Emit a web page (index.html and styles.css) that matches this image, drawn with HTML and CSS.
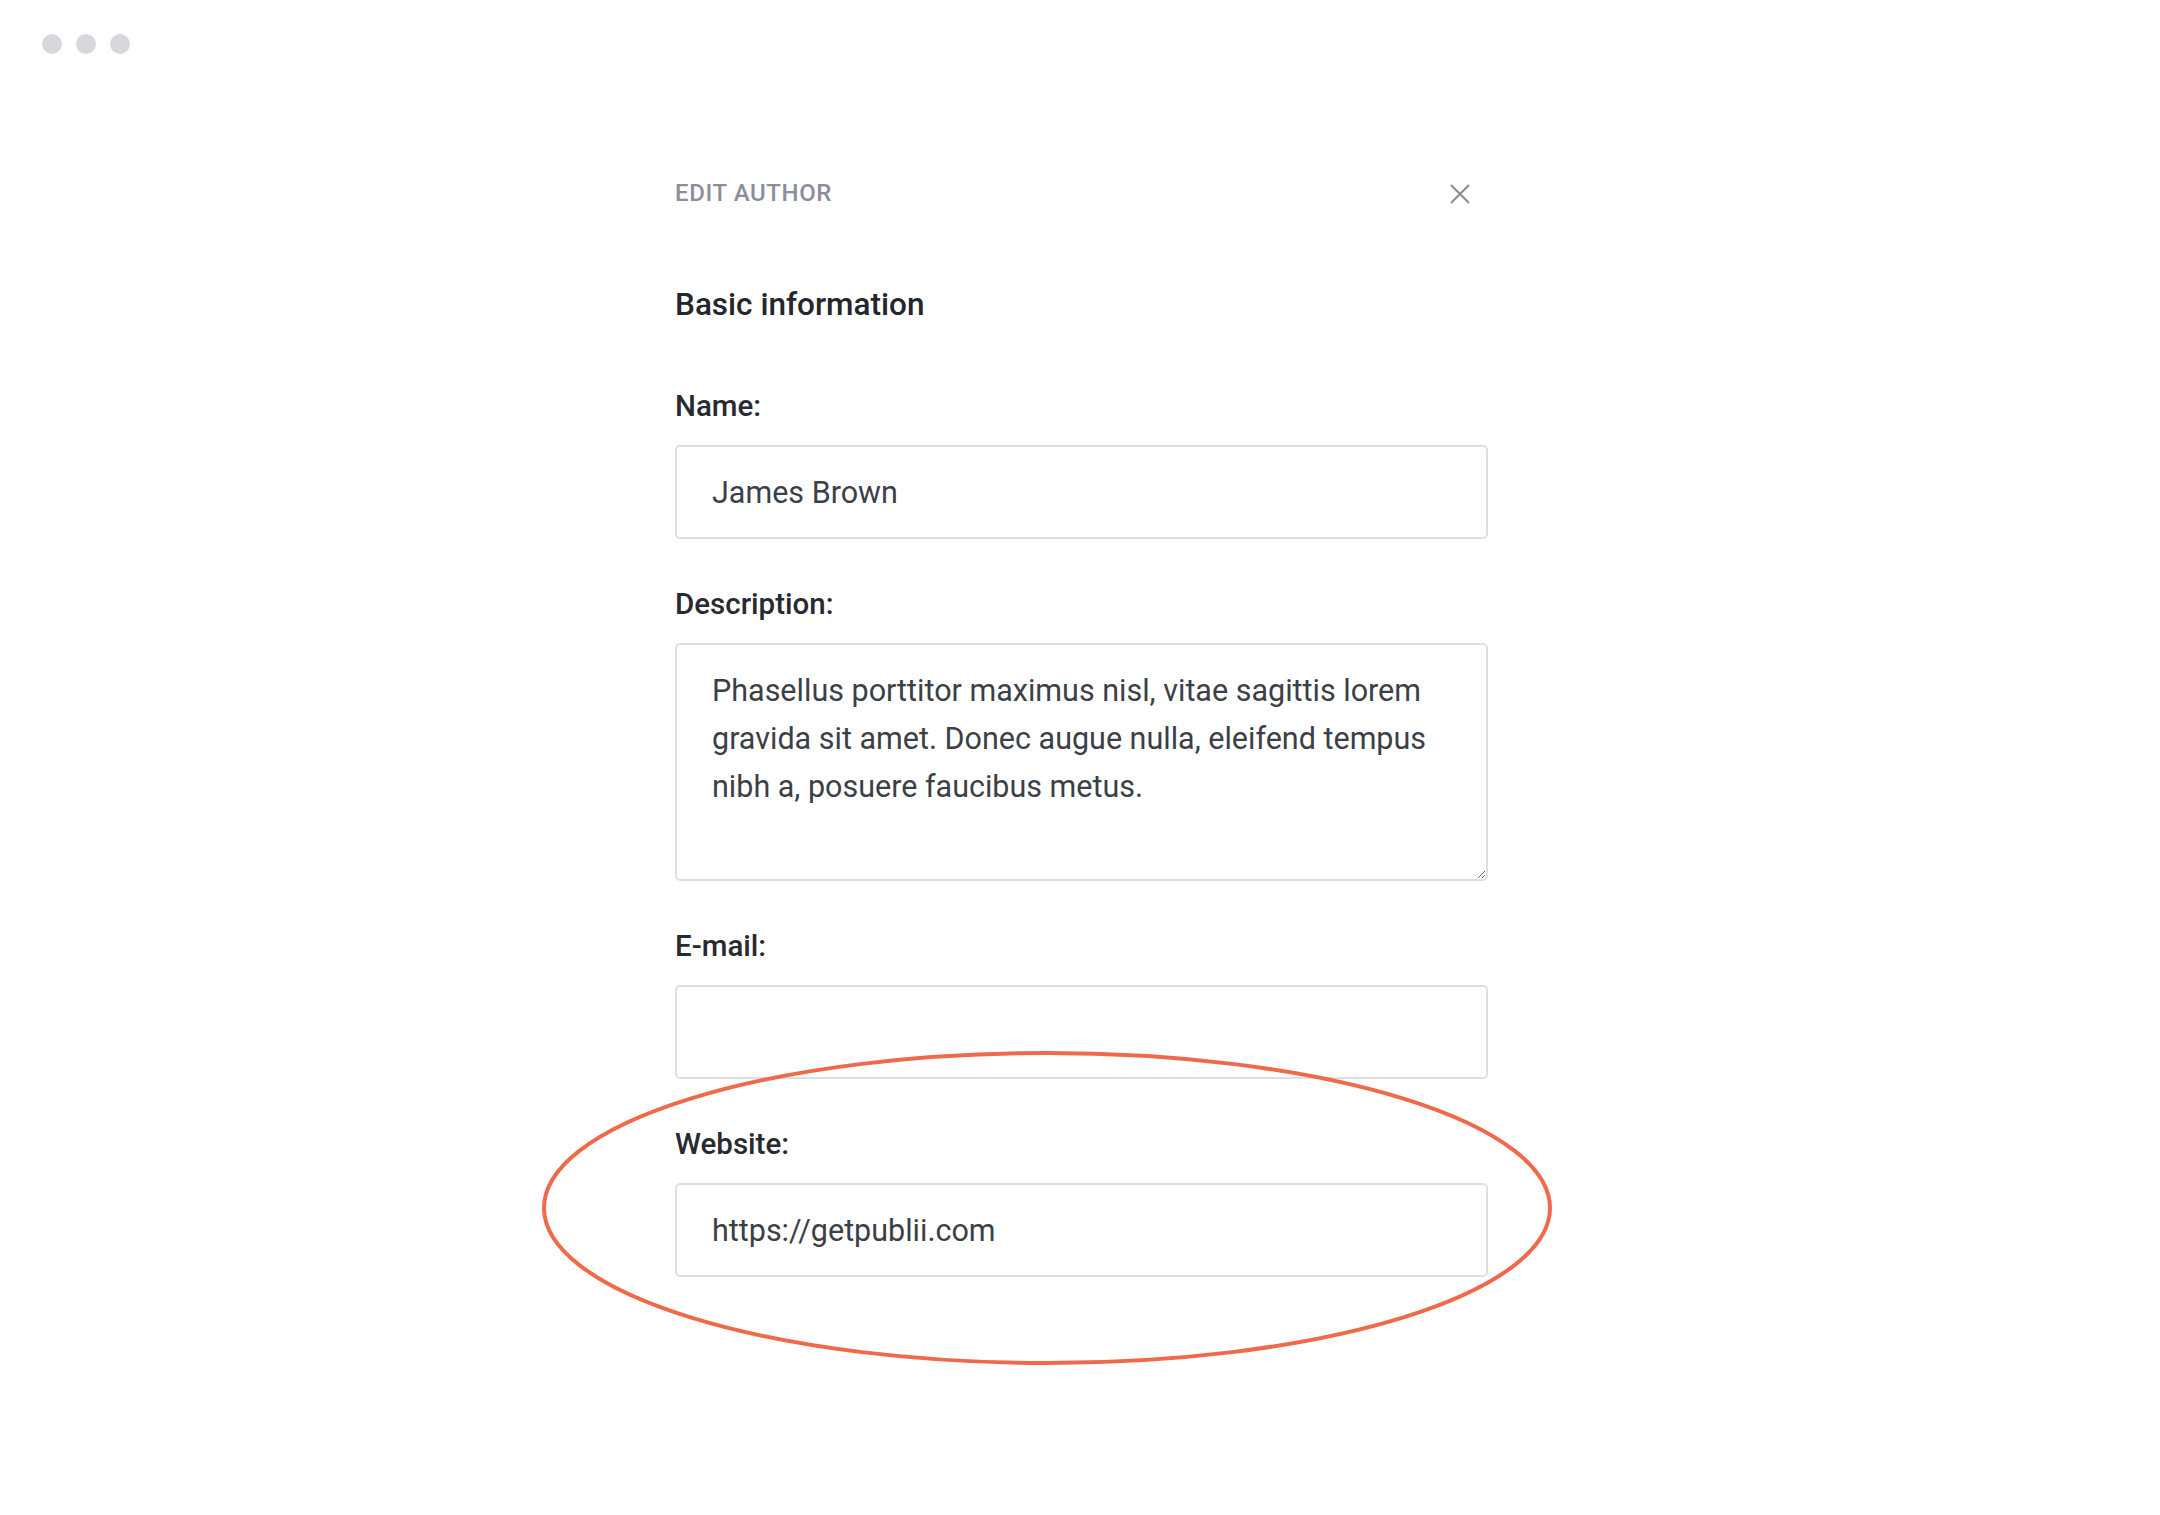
FILE: index.html
```html
<!DOCTYPE html>
<html lang="en">
<head>
<meta charset="utf-8">
<title>Edit author</title>
<link rel="stylesheet" href="styles.css">
</head>
<body>
<div class="window-bar">
  <span class="dot"></span>
  <span class="dot"></span>
  <span class="dot"></span>
</div>
<main class="panel">
  <header class="panel-header">
    <h1 class="panel-title">EDIT AUTHOR</h1>
    <button class="close-btn" type="button" aria-label="Close">
      <svg width="20" height="20" viewBox="0 0 20 20" aria-hidden="true">
        <path d="M1 1 L19 19 M19 1 L1 19" stroke="#8b8e99" stroke-width="2.2" stroke-linecap="butt" fill="none"/>
      </svg>
    </button>
  </header>
  <h2 class="section-title">Basic information</h2>
  <div class="field">
    <label class="field-label" for="name">Name:</label>
    <input class="field-input" id="name" type="text" value="James Brown">
  </div>
  <div class="field">
    <label class="field-label" for="desc">Description:</label>
    <textarea class="field-input field-textarea" id="desc">Phasellus porttitor maximus nisl, vitae sagittis lorem gravida sit amet. Donec augue nulla, eleifend tempus nibh a, posuere faucibus metus.</textarea>
  </div>
  <div class="field">
    <label class="field-label" for="email">E-mail:</label>
    <input class="field-input" id="email" type="text" value="">
  </div>
  <div class="field field-highlight">
    <label class="field-label" for="website">Website:</label>
    <input class="field-input" id="website" type="text" value="https://getpublii.com">
    <svg class="highlight-ring" width="1010" height="314" viewBox="0 0 1010 314" aria-hidden="true">
      <ellipse cx="505" cy="157" rx="503" ry="155" fill="none" stroke="#ef6a4b" stroke-width="4"/>
    </svg>
  </div>
</main>
</body>
</html>
```

FILE: styles.css
```css
html, body {
  margin: 0;
  padding: 0;
  background: #ffffff;
}

body {
  font-family: Roboto, "Liberation Sans", Arial, sans-serif;
  color: #24272e;
  width: 2160px;
  min-height: 1515px;
}

.window-bar {
  display: flex;
  gap: 14px;
  padding: 34px 0 0 42px;
  height: 54px;
  box-sizing: border-box;
}

.dot {
  width: 20px;
  height: 20px;
  border-radius: 50%;
  background: #d7d8dd;
}

.panel {
  width: 813px;
  margin: 124px 0 0 675px;
}

.panel-header {
  display: flex;
  align-items: center;
  justify-content: space-between;
  height: 30px;
}

.panel-title {
  margin: 0;
  font-size: 24px;
  line-height: 30px;
  font-weight: 500;
  color: #8b8e9a;
  letter-spacing: 0.6px;
}

.close-btn {
  border: 0;
  background: none;
  padding: 0;
  margin: 2px 18px 0 0;
  width: 20px;
  height: 20px;
  display: flex;
  cursor: pointer;
}

.section-title {
  margin: 77px 0 0;
  font-size: 31.5px;
  line-height: 40px;
  font-weight: 500;
  color: #23262c;
}

.field {
  display: flex;
  flex-direction: column;
  margin-top: 63px;
}

.field + .field {
  margin-top: 47px;
}

.field-label {
  font-size: 29.5px;
  line-height: 36px;
  font-weight: 500;
  color: #272a30;
  margin-bottom: 21px;
}

.field-input {
  box-sizing: border-box;
  width: 100%;
  height: 94px;
  margin: 0;
  padding: 0 35px;
  border: 2px solid #dedfe4;
  border-radius: 5px;
  background: #ffffff;
  font-family: Roboto, "Liberation Sans", Arial, sans-serif;
  font-size: 30.5px;
  color: #3b3f48;
  outline: none;
}

.field-textarea {
  height: 238px;
  padding: 22px 35px;
  line-height: 48px;
  resize: vertical;
  display: block;
}

.field-highlight {
  position: relative;
}

.highlight-ring {
  position: absolute;
  left: -133px;
  top: -75px;
  pointer-events: none;
}
```
